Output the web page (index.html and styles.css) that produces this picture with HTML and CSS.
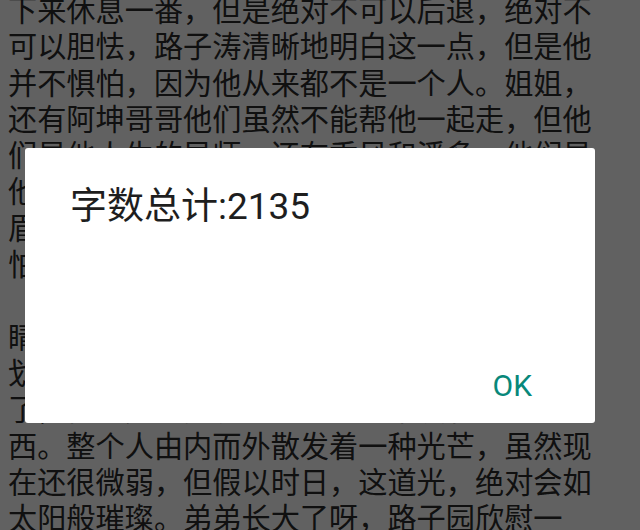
FILE: index.html
```html
<!DOCTYPE html>
<html lang="zh">
<head>
<meta charset="utf-8">
<title>字数总计</title>
<link rel="stylesheet" href="styles.css">
</head>
<body>
<div class="reader">
  <p class="line">下来休息一番，但是绝对不可以后退，绝对不</p>
  <p class="line">可以胆怯，路子涛清晰地明白这一点，但是他</p>
  <p class="line">并不惧怕，因为他从来都不是一个人。姐姐，</p>
  <p class="line">还有阿坤哥哥他们虽然不能帮他一起走，但他</p>
  <p class="line">们是他人生的导师，还有乖风和潘多，他们是</p>
  <p class="line">他一路上最好的伙伴，一起经历风雨，一起皱</p>
  <p class="line">眉，一起欢笑，所以他什么都不怕，也不需要</p>
  <p class="line">怕。</p>
  <p class="line">　　路子园看着弟弟越发坚定的眼神，那双眼</p>
  <p class="line">睛里面闪烁着光，像是已经为自己的未来规</p>
  <p class="line">划好了一切，他已经不再是那个只会哭的孩子</p>
  <p class="line">了，他的身上多了一些以前从来没有过的东</p>
  <p class="line">西。整个人由内而外散发着一种光芒，虽然现</p>
  <p class="line">在还很微弱，但假以时日，这道光，绝对会如</p>
  <p class="line">太阳般璀璨。弟弟长大了呀，路子园欣慰一</p>
</div>
<div class="scrim">
  <div class="dialog">
    <div class="dialog-title">字数总计:2135</div>
    <div class="dialog-actions">
      <span class="dialog-button">OK</span>
    </div>
  </div>
</div>
</body>
</html>
```

FILE: styles.css
```css
html, body {
  margin: 0;
  padding: 0;
  width: 640px;
  height: 530px;
  overflow: hidden;
  background: #ffffff;
}

.reader {
  margin-top: -10px;
  padding-left: 8px;
  font-family: "Noto Sans CJK SC", "Noto Sans", sans-serif;
  font-size: 29.2px;
  line-height: 36.3px;
  color: #2a2a2a;
}

.line {
  margin: 0;
  white-space: nowrap;
  height: 36.3px;
}

.scrim {
  position: fixed;
  inset: 0;
  background: rgba(0, 0, 0, 0.62);
  padding: 148px 0 0 25px;
  box-sizing: border-box;
}

.dialog {
  width: 570px;
  height: 275px;
  background: #ffffff;
  border-radius: 3px;
  box-sizing: border-box;
  display: flex;
  flex-direction: column;
  justify-content: space-between;
  padding: 37px 63px 15px 45px;
}

.dialog-title {
  font-family: Roboto, "Noto Sans CJK SC", sans-serif;
  font-size: 37px;
  line-height: 44px;
  color: #1e1e1e;
}

.dialog-actions {
  display: flex;
  justify-content: flex-end;
}

.dialog-button {
  font-family: Roboto, "Noto Sans", sans-serif;
  font-size: 30px;
  line-height: 44px;
  color: #08887a;
}
```
